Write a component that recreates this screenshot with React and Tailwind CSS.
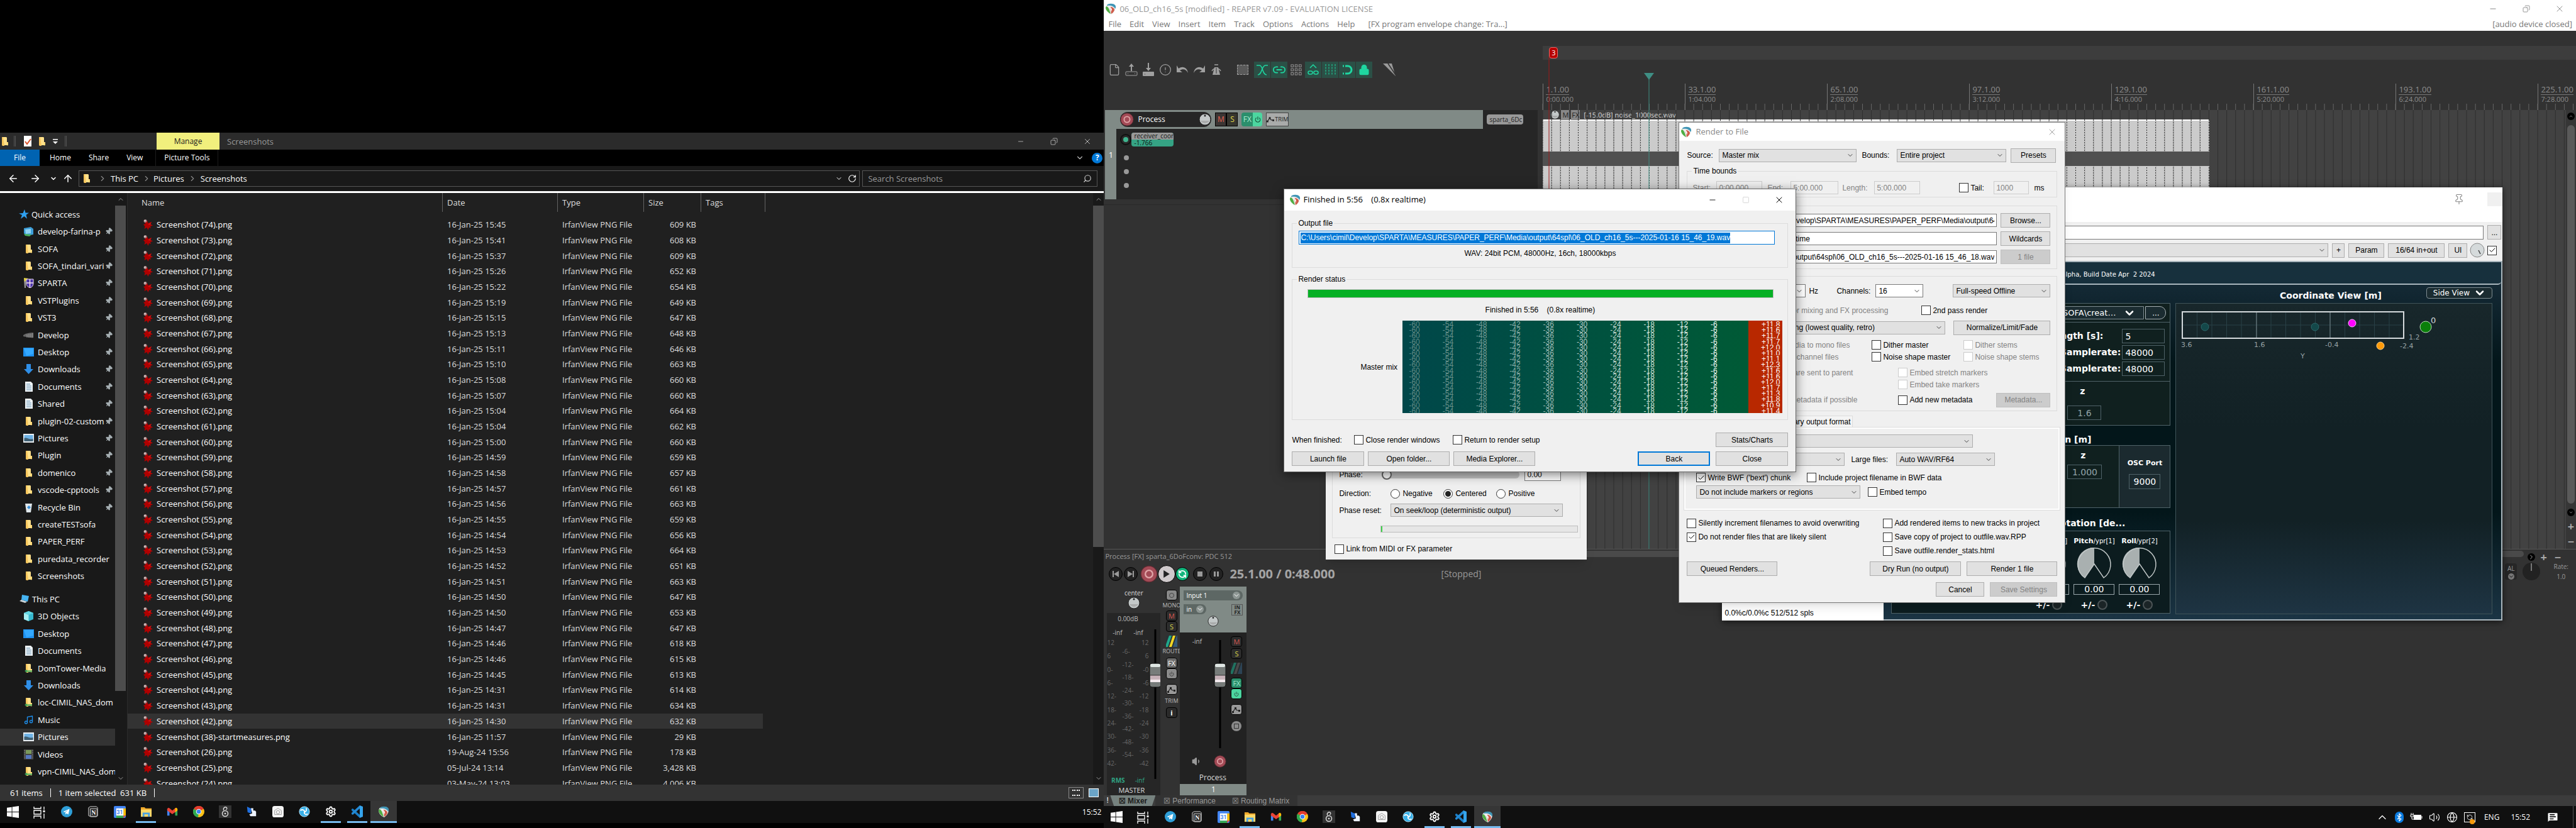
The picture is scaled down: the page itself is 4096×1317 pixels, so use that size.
import React from "react";
import {
  ArrowLeft, ArrowRight, ArrowUp, ChevronDown, ChevronUp, ChevronRight, Check, RotateCw, Search,
  Settings, Pin, X, Minus, Square, Lock, Info, Music, Bluetooth, Volume2, Globe,
  Link2, Copy, Power, Volume1, File, MessageSquareText, RefreshCcw,
} from "lucide-react";

/* ---------- small drawings ---------- */

const Folder = ({ share }) => (
  <svg viewBox="0 0 16 16" className="h-4 w-4 shrink-0">
    <path d="M3 1h7l1 1v12H3z" fill="#ffe08a" />
    <path d="M3 1h2l2 14H4L3 14z" fill="#f7c65c" />
    <path d="M11 9h2v5l-2 .5z" fill="#ffd978" />
    {share && <path d="M1 12l4-2v1.500h8v2H5V15z" fill="#3fa95c" />}
  </svg>
);

const Splat = () => (
  <svg viewBox="0 0 16 18" className="h-[18px] w-4">
    <path d="M7 3l1.500 4L14 5l-2 4 4 1.500-4 1.500 1 3-3-1-1.500 4-2-4-4 2 1-4L1 9l3-1L3 4z" fill="#b00000" />
    <path d="M8 9l6-4-2 4 4 1.500z" fill="#d41111" />
    <circle cx="4" cy="3.500" r="2.500" fill="#a88" />
    <circle cx="3.500" cy="3" r="1" fill="#eee" />
  </svg>
);

const Reaper = ({ className = "h-[18px] w-[18px]" }) => (
  <svg viewBox="0 0 18 18" className={className}>
    <path d="M2 4C4 1 14 0 16 4l1 2c0 5-3 9-7 12C5 16 1 12 1 7z" fill="#e9e9e9" />
    <path d="M2 5c2 0 4 3 5 6l2 6C5 15 1 11 1 7z" fill="#4fae43" />
    <path d="M3 3c3-3 10-3 13 0 2 3 1 5 0 6C15 5 9 3 3 4z" fill="#3f95b5" />
    <path d="M8 6c4 0 7 2 7 5-1 3-3 5-5 6z" fill="#cf5a48" />
    <path d="M5 5c3 1 4 4 5 9l1-4c-1-3-3-5-6-5z" fill="#fff" />
  </svg>
);

const Win = () => (
  <svg viewBox="0 0 20 20" className="h-[19px] w-[19px]" fill="#fff">
    <path d="M0 3l8-1.200V9.500H0zM9 1.600L20 0v9.500H9zM0 10.500h8v7.700L0 17zM9 10.500h11V20L9 18.400z" />
  </svg>
);
const TaskView = () => (
  <svg viewBox="0 0 20 20" className="h-5 w-5" fill="none" stroke="#fff" strokeWidth="1.300">
    <path d="M1 1v3h11V1M1 7h11v6H1zM1 20v-4h11v4M17 1v5M17 12v8" />
    <path d="M17 7v3" strokeWidth="3" />
  </svg>
);
const Telegram = () => (
  <svg viewBox="0 0 20 20" className="h-[18px] w-[18px]">
    <circle cx="10" cy="10" r="10" fill="#2f9fd8" />
    <path d="M4 10l11-5-2 10-3-2-2 2-.3-3.500L13 7l-6.500 4z" fill="#fff" />
  </svg>
);
const Notion = () => (
  <svg viewBox="0 0 20 20" className="h-[18px] w-[18px]">
    <path d="M2 3l3-2h11l2 2v14l-2 2H6l-4-2z" fill="#222" stroke="#ddd" />
    <path d="M5 5h12v13H5z" fill="#222" stroke="#ddd" />
    <text x="11" y="15.500" fontSize="11" fontWeight="700" fill="#fff" textAnchor="middle" fontFamily="Liberation Serif, serif">N</text>
  </svg>
);
const Calendar = () => (
  <svg viewBox="0 0 20 20" className="h-[19px] w-[19px]">
    <rect width="20" height="20" rx="2" fill="#4285f4" />
    <path d="M16 4h4v12h-4z" fill="#fbbc04" />
    <path d="M4 16h12v4H4z" fill="#34a853" />
    <path d="M16 16h4l-4 4z" fill="#ea4335" />
    <path d="M4 4h12v12H4z" fill="#fff" />
    <text x="10" y="13.500" fontSize="9" fontWeight="700" fill="#4285f4" textAnchor="middle" fontFamily="Roboto, sans-serif">31</text>
  </svg>
);
const Explorer = () => (
  <svg viewBox="0 0 20 20" className="h-[19px] w-[19px]">
    <path d="M1 2h6l2 2h10v4H1z" fill="#f0a92a" />
    <path d="M1 6h18v12H1z" fill="#ffd868" />
    <path d="M4 11h12v7h-3v-4H7v4H4z" fill="#4aa3e0" />
  </svg>
);
const Gmail = () => (
  <svg viewBox="0 0 20 20" className="h-[18px] w-[18px]">
    <path d="M1 5h4v12H1z" fill="#4285f4" />
    <path d="M15 5h4v12h-4z" fill="#34a853" />
    <path d="M1 5l2-2 2 1 5 4 5-4 2-1 2 2v3l-9 6.500L1 8z" fill="#ea4335" />
    <path d="M15 4l2-1 2 2v3l-4 3z" fill="#fbbc04" />
  </svg>
);
const Chrome = () => (
  <svg viewBox="0 0 20 20" className="h-[18px] w-[18px]">
    <circle cx="10" cy="10" r="10" fill="#fbc116" />
    <path d="M10 10L1.300 5A10 10 0 0118.700 5z" fill="#e33b2e" />
    <path d="M10 10l-1 10A10 10 0 011.300 5z" fill="#2da94f" />
    <circle cx="10" cy="10" r="4.800" fill="#fff" />
    <circle cx="10" cy="10" r="3.700" fill="#3b82f0" />
  </svg>
);
const Eight = () => (
  <svg viewBox="0 0 20 20" className="h-5 w-5">
    <rect width="20" height="20" fill="#333" />
    <circle cx="10" cy="13" r="4.500" fill="none" stroke="#ddd" strokeWidth="1.500" />
    <circle cx="10" cy="13" r="1.300" fill="#ddd" />
    <path d="M8 8c-2-3 1-6 4-5M11 7c3-1 2-4 0-4" fill="none" stroke="#ddd" strokeWidth="1.300" />
  </svg>
);
const Puzzle = () => (
  <svg viewBox="0 0 20 20" className="h-[18px] w-[18px]">
    <path d="M2 1l8 4-1 8-6-2z" fill="#1f6fe0" />
    <path d="M9 4h4v4h3l2 2v8H8l-2-3 5-2z" fill="#eef4ff" />
  </svg>
);
const WhiteApp = () => (
  <svg viewBox="0 0 20 20" className="h-[18px] w-[18px]">
    <rect width="20" height="20" rx="4" fill="#f4f4f4" />
    <path d="M10 4l6 4v7H4V8z" fill="none" stroke="#999" />
    <circle cx="10" cy="11" r="3" fill="none" stroke="#999" />
  </svg>
);
const BlueWheel = () => (
  <svg viewBox="0 0 20 20" className="h-[18px] w-[18px]">
    <circle cx="10" cy="10" r="9" fill="#39b0e8" stroke="#bfe8fa" />
    <path d="M3 8c4-3 8 0 7 3s3 5 6 3M10 11c3-1 5-4 3-7" stroke="#fff" strokeWidth="2" fill="none" />
  </svg>
);
const Code = () => (
  <svg viewBox="0 0 20 20" className="h-5 w-5">
    <path d="M1 6l2-1 11 10v5L1 8z" fill="#1a7fc8" />
    <path d="M1 14l2 1L14 5V0L1 12z" fill="#2389d4" />
    <path d="M14 0l5 2v16l-5 2z" fill="#35a4ec" />
  </svg>
);

const Gear = () => <Settings className="h-[18px] w-[18px] text-white" strokeWidth={2.500} />;

/* ---------- taskbar ---------- */

const apps = [
  ["Telegram", Telegram, 0], ["Notion", Notion, 0], ["Calendar", Calendar, 0], ["File Explorer", Explorer, 1],
  ["Gmail", Gmail, 0], ["Chrome", Chrome, 0], ["Eight", Eight, 0], ["Components", Puzzle, 0],
  ["Home", WhiteApp, 0], ["Browser", BlueWheel, 0], ["Settings", Gear, 1], ["Code", Code, 1], ["REAPER", Reaper, 2],
];

function Taskbar({ tray }) {
  return (
    <nav aria-label="Taskbar" className="flex h-[35px] shrink-0 items-stretch bg-[#101010] text-[12px] text-white">
      <button aria-label="Start" className="grid w-10 place-items-center"><Win /></button>
      <button aria-label="Task view" className="grid w-[45px] place-items-center"><TaskView /></button>
      {apps.map(([name, Icon, state]) => (
        <button key={name} aria-label={name} className={"flex w-[42px] flex-col items-center " + (state === 2 ? "bg-[#363636]" : "")}>
          <span className="grid flex-1 place-items-center pt-0.5"><Icon /></span>
          <span className={"h-[3px] " + (state === 2 ? "w-full bg-[#76b9ed]" : state === 1 ? "w-8 bg-[#76b9ed]" : "w-0")} />
        </button>
      ))}
      <div className="ml-auto flex items-center">{tray}</div>
    </nav>
  );
}

/* ---------- file explorer ---------- */

const MonitorIcon = () => (
  <svg viewBox="0 0 17 16" className="h-4 w-[17px]">
    <path d="M5 1l11 2-2 9-10-3z" fill="#46b4f2" />
    <path d="M1 11l9 3 3-2-9-3z" fill="#cfd8dc" />
  </svg>
);
const GreenPc = () => (
  <svg viewBox="0 0 17 16" className="h-4 w-[17px]">
    <path d="M1 3l11-2 4 3v9l-11 2-4-4z" fill="#3d9ed8" />
    <path d="M3 5l9-1v7l-8 1z" fill="#8fd3f4" />
    <path d="M1 12l12 1-3 3-7-1z" fill="#49b15c" />
  </svg>
);
const Shield = () => (
  <svg viewBox="0 0 17 16" className="h-4 w-[17px]">
    <path d="M1 1h3v15H2z" fill="#999" /><path d="M1 0l7 1-6 5z" fill="#e5d53a" />
    <path d="M5 2h11v7c0 4-3 6-5 7-3-1-6-3-6-7z" fill="#4a33a8" stroke="#eadcf5" />
    <path d="M10.500 2v14M5 8h11" stroke="#f5e6ee" strokeWidth="1.500" />
  </svg>
);
const Dark = () => (
  <svg viewBox="0 0 17 16" className="h-4 w-[17px]"><path d="M0 8c4-3 10-4 16-4v8c-3 1-5-1-7 0-3-2-6-1-9-2z" fill="#666" /><path d="M6 7v5M9 6v6M12 6v6M15 5v7" stroke="#999" /></svg>
);
const DesktopI = () => (
  <svg viewBox="0 0 17 16" className="h-4 w-[17px]"><path d="M0 1h17v14H0z" fill="#1e90ef" /><path d="M1 2h15v9L5 14z" fill="#33a8ff" /></svg>
);
const Down = () => (
  <svg viewBox="0 0 17 16" className="h-4 w-[17px]"><path d="M5 0h7v8h4l-7.500 8L1 8h4z" fill="#2f8fe8" /></svg>
);
const Doc = () => (
  <svg viewBox="0 0 17 16" className="h-4 w-[17px]"><path d="M3 0h9l3 3v13H3z" fill="#eef3f6" /><path d="M5 4h6M5 7h8M5 10h8M5 13h8" stroke="#5c8db0" /></svg>
);
const Pic = () => (
  <svg viewBox="0 0 17 16" className="h-4 w-[17px]"><path d="M0 1h17v14H0z" fill="#e8eef2" /><path d="M1.500 3h14v9h-14z" fill="#6fb3e6" /><path d="M1.500 8c4-2 8 3 14 1v4h-14z" fill="#3f5f73" /></svg>
);
const Cube = () => (
  <svg viewBox="0 0 17 16" className="h-4 w-[17px]"><path d="M8.500 0L16 3v10l-7.500 3L1 13V3z" fill="#37b8cf" /><path d="M8.500 6v10L1 13V3z" fill="#a6eef2" /><path d="M8.500 0L16 3 8.500 6 1 3z" fill="#63d7e3" /></svg>
);
const Film = () => (
  <svg viewBox="0 0 17 16" className="h-4 w-[17px]"><path d="M1 0h15v16H1z" fill="#444" /><path d="M4 1h9v6H4z" fill="#7a9a5a" /><path d="M4 9h9v6H4z" fill="#5577c0" /><path d="M2 1v15M15 1v15" stroke="#aaa" strokeDasharray="1 2" /></svg>
);
const Bin = () => (
  <svg viewBox="0 0 17 16" className="h-4 w-[17px]"><path d="M3 2h11l-2 14H5z" fill="#dfe6ea" /><path d="M6 8l3-3 3 3-3 3z" fill="#3a8fd8" /></svg>
);
const Star = () => (
  <svg viewBox="0 0 16 16" className="h-4 w-4"><path d="M9 0l1.500 5.500H16l-4.500 3.300L13 15 8.500 11 3 15l2-6L0 6.500 6.500 6z" fill="#2fa0f0" /></svg>
);
const Note = () => <Music className="h-4 w-[17px] text-[#1e90ef]" />;

const quick = [
  ["develop-farina-p", GreenPc, 1], ["SOFA", Folder, 1], ["SOFA_tindari_vari", Folder, 1], ["SPARTA", Shield, 1],
  ["VSTPlugins", Folder, 1], ["VST3", Folder, 1], ["Develop", Dark, 1], ["Desktop", DesktopI, 1], ["Downloads", Down, 1],
  ["Documents", Doc, 1], ["Shared", Doc, 1], ["plugin-02-custom", Folder, 1], ["Pictures", Pic, 1], ["Plugin", Folder, 1],
  ["domenico", Folder, 1], ["vscode-cpptools", Folder, 1], ["Recycle Bin", Bin, 1], ["createTESTsofa", Folder, 0],
  ["PAPER_PERF", Folder, 0], ["puredata_recorder", Folder, 0], ["Screenshots", Folder, 0],
];
const Net = () => <Folder share />;
const thisPc = [
  ["3D Objects", Cube], ["Desktop", DesktopI], ["Documents", Doc], ["DomTower-Media", Net], ["Downloads", Down],
  ["loc-CIMIL_NAS_dom", Net], ["Music", Note], ["Pictures", Pic, 0, 1], ["Videos", Film], ["vpn-CIMIL_NAS_dom", Net],
];

const J = "16-Jan-25 ";
const stamps = [
  ["15:45", 609], ["15:41", 608], ["15:37", 609], ["15:26", 652], ["15:22", 654], ["15:19", 649], ["15:15", 647],
  ["15:13", 648], ["15:11", 646], ["15:10", 663], ["15:08", 660], ["15:07", 660], ["15:04", 664], ["15:04", 662],
  ["15:00", 660], ["14:59", 659], ["14:58", 657], ["14:57", 661], ["14:56", 663], ["14:55", 659], ["14:54", 656],
  ["14:53", 664], ["14:52", 651], ["14:51", 663], ["14:50", 647], ["14:50", 653], ["14:47", 647], ["14:46", 618],
  ["14:46", 615], ["14:45", 613], ["14:31", 614], ["14:31", 634], ["14:30", 632],
];
const files = [
  ...stamps.map(([t, s], i) => ["Screenshot (" + (74 - i) + ").png", J + t, s + " KB"]),
  ["Screenshot (38)-startmeasures.png", J + "11:57", "29 KB"],
  ["Screenshot (26).png", "19-Aug-24 15:56", "178 KB"],
  ["Screenshot (25).png", "05-Jul-24 13:14", "3,428 KB"],
  ["Screenshot (24).png", "03-May-24 13:03", "4,006 KB"],
];

function NavItem({ label, Icon, pinned, active }) {
  return (
    <li className={"flex items-center " + (active ? "bg-[#333]" : "")}>
      <a href="#" className="flex min-w-0 flex-1 items-center pl-[37px]">
        <span className="grid w-[17px] shrink-0 place-items-center"><Icon /></span>
        <span className={"ml-1.5 overflow-hidden whitespace-nowrap " + (pinned ? "w-[107px]" : "flex-1")}>{label}</span>
        {pinned ? <Pin className="h-3 w-3 shrink-0 rotate-45 fill-[#a5aeb2] text-[#a5aeb2]" /> : null}
      </a>
    </li>
  );
}

function ExplorerWindow() {
  return (
    <section aria-label="Screenshots" className="flex min-h-0 flex-1 flex-col bg-[#191919] text-[13px] leading-4 text-white">
      <header className="flex h-[27px] shrink-0 items-center bg-[#2b2b2b]">
        <div className="flex w-[249px] items-center">
          <Folder />
          <span className="ml-1.5 mr-3 h-[17px] w-[3px] border-x border-[#555]" />
          <svg viewBox="0 0 14 17" className="h-[17px] w-3.5"><path d="M1 0h12v17H1z" fill="#fff" /><path d="M3 9l3 4 6-8" stroke="#d9532c" strokeWidth="2" fill="none" /></svg>
          <span className="ml-2"><Folder /></span>
          <svg viewBox="0 0 10 8" className="ml-2 h-2 w-2.5" fill="#fff"><path d="M1 0h8v1.500H1zM1 4h8L5 8z" /></svg>
          <span className="ml-2.5 h-[17px] w-[3px] border-x border-[#555]" />
        </div>
        <div className="grid h-full w-[100px] place-items-center bg-[#f1ef7d] text-[12px] text-[#222]">Manage</div>
        <h1 className="ml-3 text-[#999]">Screenshots</h1>
        <div className="ml-auto flex text-[#ccc]">
          <button aria-label="Minimize" className="grid w-[53px] place-items-center"><Minus className="h-3 w-3" strokeWidth={1.500} /></button>
          <button aria-label="Maximize" className="grid w-[53px] place-items-center"><Copy className="h-3 w-3 -scale-x-100" strokeWidth={1.500} /></button>
          <button aria-label="Close" className="grid w-[53px] place-items-center"><X className="h-3.5 w-3.5" strokeWidth={1.500} /></button>
        </div>
      </header>
      <nav className="flex h-[26px] shrink-0 items-center bg-black text-[12px]">
        <button className="h-full w-[63px] bg-[#0063b1]">File</button>
        <button className="ml-4">Home</button>
        <button className="ml-7">Share</button>
        <button className="ml-7">View</button>
        <button className="ml-5 h-full w-[100px] border-x border-[#1c1c1c]">Picture Tools</button>
        <ChevronDown className="ml-auto h-3.5 w-3.5 text-[#bbb]" />
        <button aria-label="Help" className="ml-3 mr-0.5 grid h-[17px] w-[17px] place-items-center rounded-full bg-[#0078d7] text-[12px] font-bold">?</button>
      </nav>
      <div className="flex h-10 shrink-0 items-center">
        <button aria-label="Back"><ArrowLeft className="ml-3 h-[18px] w-[18px]" /></button>
        <button aria-label="Forward"><ArrowRight className="ml-[17px] h-[18px] w-[18px]" /></button>
        <button aria-label="Recent"><ChevronDown className="ml-3.5 h-3 w-3" strokeWidth={3} /></button>
        <button aria-label="Up"><ArrowUp className="ml-2 h-[18px] w-[18px]" /></button>
        <div className="ml-2 flex h-[26px] flex-1 items-center border border-[#555] pl-1">
          <Folder />
          <ChevronRight className="ml-2.5 h-3.5 w-3.5 text-[#888]" />
          <a href="#" className="ml-1.5">This PC</a>
          <ChevronRight className="ml-1.5 h-3.5 w-3.5 text-[#888]" />
          <a href="#" className="ml-1">Pictures</a>
          <ChevronRight className="ml-1.5 h-3.5 w-3.5 text-[#888]" />
          <a href="#" className="ml-1.5">Screenshots</a>
          <ChevronDown className="ml-auto h-3 w-3" />
          <RotateCw className="ml-2 mr-1 h-3.5 w-3.5" />
        </div>
        <label className="ml-1 mr-2.5 flex h-[26px] w-[374px] items-center border border-[#555] px-2">
          <input aria-label="Search" placeholder="Search Screenshots" className="flex-1 bg-transparent outline-none placeholder:text-[#999]" />
          <Search className="h-3.5 w-3.5 -scale-x-100 text-[#ccc]" />
        </label>
      </div>
      <div className="h-[3px] shrink-0 bg-white" />
      <div className="flex min-h-0 flex-1">
        <nav aria-label="Folders" className="w-[183px] shrink-0 overflow-hidden pt-5">
          <ul className="grid h-[603px] auto-rows-fr">
            <li className="flex items-center pl-[30px]"><Star /><span className="ml-1">Quick access</span></li>
            {quick.map(([l, I, p]) => <NavItem key={l} label={l} Icon={I} pinned={p} />)}
          </ul>
          <ul className="mt-[9px] grid h-[302px] auto-rows-fr">
            <li className="flex items-center pl-[30px]"><MonitorIcon /><span className="ml-1">This PC</span></li>
            {thisPc.map(([l, I, p, a]) => <NavItem key={l} label={l} Icon={I} pinned={p} active={a} />)}
          </ul>
        </nav>
        <div className="flex w-[17px] shrink-0 flex-col items-center">
          <ChevronUp className="h-5 w-3 text-[#999]" />
          <div className="h-[772px] w-full bg-[#4d4d4d]" />
          <ChevronDown className="mt-auto h-5 w-3 text-[#999]" />
        </div>
        <div className="w-[3px] shrink-0 border-r border-[#2b2b2b]" />
        <div className="min-w-0 flex-1 overflow-hidden bg-[#202020]">
          <table className="w-[1014px] table-fixed border-separate border-spacing-0 text-left">
            <colgroup><col className="w-[501px]" /><col className="w-[183px]" /><col className="w-[137px]" /><col className="w-[91px]" /><col className="w-[102px]" /></colgroup>
            <thead>
              <tr className="h-[30px] text-[#dedede]">
                {["Name", "Date", "Type", "Size", "Tags"].map((h, i) => (
                  <th key={h} className={"border-r border-[#636363] font-normal " + (i ? "pl-[7px]" : "pl-[22px]")}>{h}</th>
                ))}
              </tr>
            </thead>
          </table>
          <table className="mt-2 h-[913px] w-[1010px] table-fixed border-separate border-spacing-0 text-[#dedede]">
            <colgroup><col className="w-[501px]" /><col className="w-[183px]" /><col className="w-[137px]" /><col className="w-[91px]" /><col className="w-[98px]" /></colgroup>
            <tbody>
              {files.map(([n, d, s], i) => (
                <tr key={n} className={i === 32 ? "bg-[#333]" : ""}>
                  <td className="py-0 pl-6"><span className="flex items-center gap-1.5 text-white"><Splat />{n}</span></td>
                  <td className="py-0 pl-[7px]">{d}</td>
                  <td className="py-0 pl-[7px]">IrfanView PNG File</td>
                  <td className="py-0 pr-2 text-right">{s}</td>
                  <td className="p-0" />
                </tr>
              ))}
            </tbody>
          </table>
        </div>
        <div className="flex w-[17px] shrink-0 flex-col items-center">
          <ChevronUp className="h-5 w-3 text-[#999]" />
          <div className="h-[543px] w-full bg-[#4d4d4d]" />
          <ChevronDown className="mt-auto h-5 w-3 text-[#999]" />
        </div>
      </div>
      <footer className="flex h-[26px] shrink-0 items-center bg-[#333] pl-4">
        <span>61 items</span><span className="mx-3 h-3.5 w-px bg-white" />
        <span>1 item selected&nbsp; 631 KB</span><span className="mx-3 h-3.5 w-px bg-white" />
        <span className="ml-auto mr-2 grid h-[18px] w-6 place-items-center border border-[#888]"><span className="h-2.5 w-3 border-y-2 border-dotted border-white" /></span>
        <span className="mr-2 h-3.5 w-4 border border-white bg-[#6ba4c7]" />
      </footer>
    </section>
  );
}

/* ---------- form controls ---------- */

const Btn = ({ children, className = "", disabled, focus }) => (
  <button disabled={disabled} className={"grid h-[23px] shrink-0 place-items-center whitespace-nowrap " +
    (disabled ? "border border-[#bfbfbf] bg-[#ccc] text-[#838383] " : focus ? "border-2 border-[#0078d7] bg-[#e1e1e1] " : "border border-[#adadad] bg-[#e1e1e1] ") + className}>
    {children}
  </button>
);

const Tick = ({ label, checked, disabled, className = "" }) => (
  <label className={"flex shrink-0 items-center whitespace-nowrap " + (disabled ? "text-[#838383] " : "") + className}>
    <span className="mr-[3px] grid place-items-center">
      <input type="checkbox" defaultChecked={checked} disabled={disabled}
        className={"h-[15px] w-[15px] appearance-none border bg-white [grid-area:1/1] " + (disabled ? "border-[#ccc]" : "border-[#333]")} />
      {checked && <Check className="pointer-events-none h-3 w-3 [grid-area:1/1]" strokeWidth={2} />}
    </span>
    {label}
  </label>
);

const Pick = ({ value, label, className = "", white }) => (
  <span className={"grid h-[21px] shrink-0 items-center " + className}>
    <select aria-label={label || value} defaultValue={value}
      className={"h-full w-full min-w-0 appearance-none border pl-1 [grid-area:1/1] " + (white ? "border-[#7a7a7a] bg-white" : "border-[#adadad] bg-[#e1e1e1]")}>
      <option>{value}</option>
    </select>
    <ChevronDown className="pointer-events-none mr-1 h-3 w-3 justify-self-end text-[#444] [grid-area:1/1]" />
  </span>
);

const Field = ({ value, label, className = "", disabled }) => (
  <input aria-label={label} defaultValue={value} disabled={disabled}
    className={"h-[21px] min-w-0 border px-[3px] " + (disabled ? "border-[#ccc] text-[#838383] " : "border-[#7a7a7a] bg-white ") + className} />
);

const Group = ({ legend, children, className = "" }) => (
  <fieldset className={"min-w-0 border border-[#dcdcdc] " + className}>
    <legend className="ml-[7px] h-4 px-0.5 leading-4">{legend}</legend>
    {children}
  </fieldset>
);

/* ---------- dialogs ---------- */

function RenderDialog() {
  return (
    <section aria-label="Render to File" className="absolute left-[914px] top-[194px] w-[615px] border border-[#777] bg-[#f0f0f0] text-[12px] text-black shadow-lg">
      <header className="flex h-[29px] items-center bg-white pl-0.5 pr-3 text-[13px] text-[#888]">
        <Reaper /><h2 className="ml-1.5 font-['Open_Sans',sans-serif]">Render to File</h2>
        <button aria-label="Close" className="ml-auto"><X className="h-4 w-4" strokeWidth={1.200} /></button>
      </header>
      <div className="px-3 pb-[9px]">
        <div className="mt-3 flex h-[22px] items-center">
          <span className="w-[51px]">Source:</span><Pick value="Master mix" label="Source" className="w-[219px]" />
          <span className="ml-2 w-[56px]">Bounds:</span><Pick value="Entire project" label="Bounds" className="w-[174px]" />
          <Btn className="ml-[7px] h-[21px] w-[72px]">Presets</Btn>
        </div>
        <Group legend="Time bounds" className="mt-1.5 pb-1">
          <div className="mt-2 flex h-[21px] items-center pl-2">
            <span className="w-[38px] text-[#838383]">Start:</span><Field label="Start" value="0:00.000" disabled className="w-[73px]" />
            <span className="ml-2 w-[37px] text-[#838383]">End:</span><Field label="End" value="5:00.000" disabled className="w-[76px]" />
            <span className="ml-1.5 w-[51px] text-[#838383]">Length:</span><Field label="Length" value="5:00.000" disabled className="w-[73px]" />
            <Tick label="Tail:" className="ml-[62px] w-[55px]" /><Field label="Tail length" value="1000" disabled className="w-[56px]" />
            <span className="ml-2">ms</span>
          </div>
        </Group>
        <Group legend="Output" className="mt-[5px] pb-2 pl-2 pr-2.5">
          <div className="mt-[5px] flex flex-col gap-2">
            {[["Directory:", "C:\\Users\\cimil\\Develop\\SPARTA\\MEASURES\\PAPER_PERF\\Media\\output\\64spl", "Browse...", "text-right"],
              ["File name:", "$project---$datetime", "Wildcards", "pl-2.5"],
              ["Render to:", "Media\\output\\64spl\\06_OLD_ch16_5s---2025-01-16 15_46_18.wav", "1 file", "text-right"]].map(([l, v, b, a], i) => (
              <div key={l} className="flex h-[21px] items-center">
                <span className="w-[68px]">{l}</span><Field label={l} value={v} className={"flex-1 " + a} />
                <Btn disabled={i === 2} className="ml-1.5 h-[21px] w-[79px]">{b}</Btn>
              </div>
            ))}
          </div>
        </Group>
        <Group legend="Options" className="mt-[3px] pb-1.5 pl-2 pr-2.5">
          <div className="mt-[5px] flex h-[21px] items-center">
            <span className="w-20">Sample rate:</span><Pick white value="48000" label="Sample rate" className="w-[100px]" />
            <span className="ml-[5px] w-11">Hz</span><span className="w-[62px]">Channels:</span><Pick white value="16" label="Channels" className="w-[76px]" />
            <Pick value="Full-speed Offline" label="Speed" className="ml-auto w-[155px]" />
          </div>
          <div className="flex h-[37px] items-center pt-1">
            <Tick disabled label="Use project sample rate for mixing and FX processing" className="w-[311px] justify-end" />
            <Tick label="2nd pass render" className="ml-[53px]" />
          </div>
          <div className="flex h-[22px] items-center">
            <span className="w-[90px]">Resample mode:</span><Pick value="Point Sampling (lowest quality, retro)" label="Resample mode" className="w-[312px]" />
            <Btn className="ml-auto h-[22px] w-[154px]">Normalize/Limit/Fade</Btn>
          </div>
          <div className="mt-[7px] flex h-[19px] items-center">
            <Tick disabled label="Tracks with only mono media to mono files" className="w-[250px] justify-end" />
            <Tick label="Dither master" className="ml-[35px] w-[146px]" /><Tick disabled label="Dither stems" />
          </div>
          <div className="flex h-[19px] items-center">
            <Tick disabled label="Multichannel tracks to multichannel files" className="w-[232px] justify-end" />
            <Tick label="Noise shape master" className="ml-[53px] w-[146px]" /><Tick disabled label="Noise shape stems" />
          </div>
          <div className="mt-1.5 flex h-[19px] items-center">
            <Tick disabled label="Only render channels that are sent to parent" className="w-[255px] justify-end" />
            <Tick disabled label="Embed stretch markers" className="ml-[72px]" />
          </div>
          <div className="flex h-[19px] items-center"><Tick disabled label="Embed take markers" className="ml-[327px]" /></div>
          <div className="mt-1 flex h-[22px] items-center">
            <Tick disabled label="Preserve source media metadata if possible" className="w-[262px] justify-end" />
            <Tick label="Add new metadata" className="ml-[65px]" />
            <Btn disabled className="ml-auto h-[21px] w-[86px]">Metadata...</Btn>
          </div>
        </Group>
        <div className="-mx-1 mt-[7px]">
          <div role="tablist" className="flex h-[19px] items-stretch">
            <button role="tab" className="w-[130px] border border-b-0 border-[#dcdcdc]">Primary output format</button>
            <button role="tab" className="w-[138px] border border-b-0 border-l-0 border-[#dcdcdc] bg-[#f4f4f4]">Secondary output format</button>
          </div>
          <div className="border-2 border-white pb-4 pl-[17px] outline outline-[#dcdcdc]">
            <div className="mt-[9px] flex h-[21px] items-center"><span className="w-11">Format:</span><Pick value="WAV" label="Format" className="w-[396px]" /></div>
            <div className="mt-2 flex h-[21px] items-center">
              <span className="w-[94px]">WAV bit depth:</span><Pick value="24 bit PCM" label="Bit depth" className="w-[142px]" />
              <span className="ml-2.5 w-[72px]">Large files:</span><Pick value="Auto WAV/RF64" label="Large files" className="w-[157px]" />
            </div>
            <div className="mt-[9px] flex h-[19px] items-center"><Tick checked label="Write BWF ('bext') chunk" className="w-[176px]" /><Tick label="Include project filename in BWF data" /></div>
            <div className="mt-[3px] flex h-[21px] items-center"><Pick value="Do not include markers or regions" label="Markers" className="w-[261px]" /><Tick label="Embed tempo" className="ml-3" /></div>
          </div>
        </div>
        <div className="mt-2.5 grid auto-rows-[22px] grid-cols-[312px_1fr] items-center">
          <Tick label="Silently increment filenames to avoid overwriting" /><Tick label="Add rendered items to new tracks in project" />
          <Tick checked label="Do not render files that are likely silent" /><Tick label="Save copy of project to outfile.wav.RPP" />
          <span /><Tick label="Save outfile.render_stats.html" />
        </div>
        <div className="mt-1.5 flex"><Btn className="w-[144px]">Queued Renders...</Btn><Btn className="ml-auto w-[145px]">Dry Run (no output)</Btn><Btn className="ml-[9px] w-[144px]">Render 1 file</Btn></div>
        <div className="mt-2.5 flex justify-end"><Btn className="w-[77px]">Cancel</Btn><Btn disabled className="ml-[9px] w-[107px]">Save Settings</Btn></div>
      </div>
    </section>
  );
}

const peaks = ["+11.8", "+11.6", "+11.7", "+11.7", "+12.0", "+11.0", "+11.1", "+12.3", "+11.6", "+11.6", "+12.0", "+11.7", "+11.3", "+11.8", "+10.9", "+11.4"];
const levels = [
  ["-60", "text-[#5f8783]"], ["-54", "text-[#67908b]"], ["-48", "text-[#779c97]"], ["-42", "text-[#8cada7]"], ["-36", "text-[#9dbab3]"],
  ["-30", "text-[#b3c9c3]"], ["-24", "text-[#c2d6cd]"], ["-18", "text-[#d3e3da]"], ["-12", "text-[#e4efe8]"], ["-6", "text-[#f2f8f4]"],
];

function FinishedDialog() {
  return (
    <section aria-label="Finished" className="absolute left-[286px] top-[300px] w-[815px] border border-[#666] bg-[#f0f0f0] text-[12px] text-black shadow-[0_4px_16px_rgba(0,0,0,0.5)]">
      <header className="flex h-[34px] items-center bg-white pl-2 text-[13px]">
        <Reaper /><h2 className="ml-1 whitespace-pre font-['Open_Sans',sans-serif]">Finished in 5:56    (0.8x realtime)</h2>
        <div className="ml-auto flex">
          <button aria-label="Minimize" className="grid w-[53px] place-items-center"><Minus className="h-3.5 w-3.5" strokeWidth={1.500} /></button>
          <button aria-label="Maximize" disabled className="grid w-[53px] place-items-center text-[#ccc]"><Square className="h-3 w-3" strokeWidth={1.500} /></button>
          <button aria-label="Close" className="grid w-[53px] place-items-center"><X className="h-4 w-4" strokeWidth={1.500} /></button>
        </div>
      </header>
      <div className="px-3 pb-[9px]">
        <Group legend="Output file" className="mt-3 pb-3.5">
          <div className="ml-2.5 mr-5 mt-1 flex h-[22px] items-center border border-[#0078d7] bg-white px-0.5">
            <output className="whitespace-nowrap bg-[#0078d7] leading-[17px] text-white">C:\Users\cimil\Develop\SPARTA\MEASURES\PAPER_PERF\Media\output\64spl\06_OLD_ch16_5s---2025-01-16 15_46_19.wav</output>
          </div>
          <p className="mt-1.5 text-center leading-4">WAV: 24bit PCM, 48000Hz, 16ch, 18000kbps</p>
        </Group>
        <Group legend="Render status" className="mt-2.5 pb-2.5">
          <div role="progressbar" aria-valuenow="100" className="ml-6 mr-[22px] mt-2 h-3.5 border border-[#bcbcbc] bg-[#06b025]" />
          <p className="mt-[11px] whitespace-pre text-center leading-4">Finished in 5:56    (0.8x realtime)</p>
          <div className="mt-[9px] flex h-[147px] items-center pl-[108px] pr-2">
            <span className="w-[67px] shrink-0">Master mix</span>
            <div className="flex h-full min-w-0 flex-1 flex-col overflow-hidden bg-[linear-gradient(90deg,#00474a,#005a36_90%)] text-[12px] leading-[9px]">
              {peaks.map((p, i) => (
                <div key={i} className="flex min-h-0 flex-1">
                  <div className="grid flex-1 grid-cols-10 pl-2.5 pr-[7px] pt-0.5">
                    {levels.map(([l, c]) => <span key={l} className={c}>{l}</span>)}
                  </div>
                  <span className="w-[54px] bg-[#b82800] pr-1 pt-0.5 text-right text-white">{p}</span>
                </div>
              ))}
            </div>
          </div>
        </Group>
        <div className="mt-5 flex h-[23px] items-center">
          <span className="w-[99px]">When finished:</span><Tick label="Close render windows" className="w-[157px]" /><Tick label="Return to render setup" />
          <Btn className="ml-auto w-[115px]">Stats/Charts</Btn>
        </div>
        <div className="mt-[7px] flex">
          <Btn className="w-[115px]">Launch file</Btn><Btn className="ml-1.5 w-[130px]">Open folder...</Btn><Btn className="ml-1.5 w-[130px]">Media Explorer...</Btn>
          <Btn focus className="ml-auto w-[115px]">Back</Btn><Btn className="ml-[9px] w-[115px]">Close</Btn>
        </div>
      </div>
    </section>
  );
}

function ModDialog() {
  return (
    <section aria-label="Parameter modulation" className="absolute left-[353px] top-[722px] w-[415px] bg-[#f0f0f0] text-[12px] text-black shadow-lg">
      <div className="mx-2.5 border border-t-0 border-[#dcdcdc] pb-2 pl-2.5 pt-[22px]">
        <div className="flex h-[21px] items-center">
          <label htmlFor="phase" className="w-[68px]">Phase:</label>
          <input id="phase" type="range" defaultValue="0" className="h-3 w-[219px] appearance-none rounded-full bg-[#c4c4c4] [&::-webkit-slider-thumb]:h-4 [&::-webkit-slider-thumb]:w-4 [&::-webkit-slider-thumb]:appearance-none [&::-webkit-slider-thumb]:rounded-full [&::-webkit-slider-thumb]:border-2 [&::-webkit-slider-thumb]:border-[#666] [&::-webkit-slider-thumb]:bg-white" />
          <Field label="Phase value" value="0.00" className="ml-2 w-[58px]" />
        </div>
        <div className="mt-2.5 flex h-5 items-center">
          <span className="w-[82px]">Direction:</span>
          {["Negative", "Centered", "Positive"].map((r) => (
            <label key={r} className="flex w-[84px] items-center gap-1">
              <span className="grid place-items-center">
                <input type="radio" name="direction" defaultChecked={r === "Centered"} className="h-[15px] w-[15px] appearance-none rounded-full border border-[#333] bg-white [grid-area:1/1]" />
                {r === "Centered" && <span className="h-[9px] w-[9px] rounded-full bg-[#222] [grid-area:1/1]" />}
              </span>{r}
            </label>
          ))}
        </div>
        <div className="mt-1.5 flex items-center"><span className="w-[82px]">Phase reset:</span><Pick value="On seek/loop (deterministic output)" label="Phase reset" className="w-[274px]" /></div>
        <div className="ml-[66px] mt-3.5 h-[11px] w-[314px] border border-[#bcbcbc] bg-[#e6e6e6]"><div className="h-full w-0.5 bg-[#3ecf4a]" /></div>
      </div>
      <div className="px-3.5 pb-2 pt-2"><Tick label="Link from MIDI or FX parameter" /></div>
    </section>
  );
}

/* ---------- plug-in window ---------- */

const Box = ({ children, className = "" }) => (
  <input aria-label="value" defaultValue={children} className={"min-w-0 border border-[#4f6268] bg-transparent px-1 text-[14px] " + className} />
);

const Dial = () => (
  <svg viewBox="0 0 56 56" className="h-14 w-14">
    <path d="M28 28V2A26 26 0 0 0 13 50z" fill="#a9b0b0" />
    <path d="M13 50A26 26 0 1 1 43 50L28 28z" fill="none" stroke="#c2c8c8" strokeWidth="1.500" />
  </svg>
);

const room = Array.from({ length: 14 }, (_, i) => i + 1);

function PluginWindow() {
  return (
    <section aria-label="FX" className="absolute left-[983px] top-[298px] flex h-[689px] w-[1241px] flex-col bg-[#f0f0f0] text-[12px] text-black shadow-[0_2px_10px_rgba(0,0,0,0.6)]">
      <header className="flex h-[55px] shrink-0 items-start justify-end bg-white pt-2">
        <Pin className="mr-9 mt-0.5 h-[18px] w-[18px] text-[#888]" strokeWidth={1.500} />
        <span className="h-[22px] w-6 bg-[#f0f0f0]" />
      </header>
      <div className="flex shrink-0 items-center pl-[300px] pr-0.5 pt-[5px]">
        <Field label="Comment" value="" className="h-[22px] flex-1" /><Btn className="ml-1.5 h-5 w-[22px]">...</Btn>
      </div>
      <div className="flex h-[34px] shrink-0 items-center pl-[300px] pr-2.5">
        <Pick value="" label="Preset" className="h-[22px] flex-1" />
        <Btn className="ml-1.5 h-5 w-5">+</Btn><Btn className="ml-1.5 h-5 w-[57px]">Param</Btn><Btn className="ml-1.5 h-5 w-[90px]">16/64 in+out</Btn><Btn className="ml-1.5 h-5 w-[30px]">UI</Btn>
        <svg viewBox="0 0 24 24" className="mx-1 h-6 w-6"><circle cx="12" cy="12" r="11" fill="#d5dadb" stroke="#888" /><path d="M14 12l3 6" stroke="#444" strokeWidth="1.500" /></svg>
        <Tick checked label="" className="-mr-1" />
      </div>
      <div className="flex min-h-0 flex-1">
        <div className="flex w-[257px] shrink-0 flex-col justify-end bg-white pb-[3px] pl-1">0.0%c/0.0%c 512/512 spls</div>
        <div className="flex min-w-0 flex-1 flex-col border-2 border-l-0 border-[#a9b6bd] bg-[linear-gradient(180deg,#192f3d,#03161a_28%,#03161a_70%,#1b3444)] font-['DejaVu_Sans',sans-serif] text-white">
          <div className="flex h-9 shrink-0 items-center rounded-[5px] border-b-2 border-[#a9b6bd] bg-[#17303d] pl-[190px] pt-1 text-[10px]">
            <span className="whitespace-pre">SPARTA 6DoFconv alpha, Build Date Apr  2 2024</span>
          </div>
          <div className="flex min-h-0 flex-1">
            <div className="flex w-[456px] shrink-0 flex-col pl-3 pt-[29px]">
              <div className="flex h-[125px] flex-col border border-[#4f6268] bg-[#10201f]">
                <div className="flex h-[30px] items-center justify-end border-b border-[#4f6268] pr-1.5">
                  <button className="flex h-[21px] w-[230px] items-center justify-end gap-3 rounded-l border border-[#7f8d92] bg-[#1b2c31] pr-3 text-[13px]">C:\SOFA\creat… <ChevronDown className="h-5 w-5" strokeWidth={3} /></button>
                  <button className="ml-0.5 h-[21px] w-[33px] rounded-r-[10px] border border-[#a7b1b5] bg-[#1b2c31]">...</button>
                </div>
                {[["Filter Length [s]:", "5"], ["Filter Samplerate:", "48000"], ["Host Samplerate:", "48000"]].map(([l, v], i) => (
                  <label key={l} className={"flex items-center justify-end pr-2 text-[14px] font-bold " + (i ? "mt-[3px]" : "mt-2.5")}>
                    <span className={i ? "" : "mr-7"}>{l}</span><Box className="ml-0.5 h-[23px] w-[68px] font-normal">{v}</Box>
                  </label>
                ))}
              </div>
              <div className="flex h-[70px] flex-col items-end border border-t-0 border-[#4f6268] bg-[#10201f] pr-[109px]">
                <span className="mr-[26px] mt-[5px] text-[14px] font-bold">z</span>
                <Box className="mt-3 h-[23px] w-[54px] bg-[#15272b] text-center text-[#8fa0a5]">1.6</Box>
              </div>
              <h3 className="mr-[126px] h-[31px] pt-3 text-right text-[14px] font-bold leading-5">Listener Position [m]</h3>
              <div className="flex h-[100px] border border-[#4f6268] bg-[#10201f]">
                <div className="flex flex-1 flex-col items-end pr-[27px] pt-[5px]">
                  <span className="mr-[26px] text-[14px] font-bold">z</span>
                  <Box className="mt-1 h-[23px] w-[55px] bg-[#44585f] text-center text-[#93a5ab]">1.000</Box>
                </div>
                <div className="flex w-[81px] flex-col items-center border-l border-[#4f6268] bg-[#1b2a2f] pt-5">
                  <span className="text-[11px] font-bold">OSC Port</span>
                  <Box className="mt-2 h-6 w-[50px] text-center">9000</Box>
                </div>
              </div>
              <h3 className="mr-[72px] h-9 pt-3.5 text-right text-[14px] font-bold leading-5">Rotation [de...</h3>
              <div className="flex h-[132px] justify-end gap-[7px] border border-[#4f6268] bg-[#0c1c1f] pr-4 pt-2">
                {[["Yaw", "0"], ["Pitch", "1"], ["Roll", "2"]].map(([n, i]) => (
                  <div key={n} className="flex w-[65px] flex-col items-center">
                    <span className="whitespace-nowrap text-[11px] leading-4"><b>{n}</b><span className="text-[10px]">/ypr[{i}]</span></span>
                    <Dial />
                    <Box className="mt-1 h-[17px] w-full border-[#9aa7ab] text-center">0.00</Box>
                    <span className="mt-2 flex items-center gap-1 text-[14px] font-bold leading-4">+/-<span className="h-4 w-4 rounded-full border-2 border-[#4c5456] bg-[#1b2426]" /></span>
                  </div>
                ))}
              </div>
            </div>
            <div className="flex min-w-0 flex-1 flex-col pb-2 pl-2 pr-3.5">
              <div className="flex h-[29px] items-center">
                <h3 className="flex-1 pl-[94px] pt-1.5 text-center text-[14px] font-bold">Coordinate View [m]</h3>
                <button className="mb-1 flex h-[18px] w-[105px] items-center justify-center gap-1.5 rounded border border-[#7f8d92] bg-[#1b2c31] text-[12px]">Side View<ChevronDown className="h-5 w-5" strokeWidth={3} /></button>
              </div>
              <div className="min-h-0 flex-1 border border-[#3f5358] bg-[linear-gradient(180deg,#18272b,#122125_40%,#122125_70%,#1e3443)]">
                <svg className="h-full w-full" fontFamily="DejaVu Sans, sans-serif">
                  {room.map((i) => <path key={i} d={"M" + (10 + i * 23.500) + " 13v42"} stroke="#294047" />)}
                  <path d="M10 34h352" stroke="#294047" />
                  <path d="M128 13v42M245 13v42" stroke="#79878c" />
                  <path d="M10 13h352v42H10z" fill="none" stroke="#d5dadd" strokeWidth="2" />
                  <circle cx="46" cy="37" r="6" fill="#14484a" stroke="#2c6a6c" />
                  <circle cx="221" cy="37" r="6" fill="#14484a" stroke="#2c6a6c" />
                  <circle cx="280" cy="31" r="6" fill="#f0f" stroke="#fbf" />
                  <circle cx="325" cy="67" r="6" fill="#ff9b0a" stroke="#ffd28a" />
                  <circle cx="397" cy="37" r="9" fill="#0a7f0a" stroke="#b8dcb8" />
                  <g fill="#98a3a6" fontSize="11">
                    <text x="8" y="69">3.6</text><text x="124" y="69">1.6</text><text x="237" y="69">-0.4</text><text x="356" y="71">-2.4</text>
                    <text x="370" y="57">1.2</text><text x="198" y="87">Y</text>
                  </g>
                  <text x="405" y="31" fill="#d5dadd" fontSize="13">0</text>
                </svg>
              </div>
            </div>
          </div>
        </div>
      </div>
    </section>
  );
}

/* ---------- REAPER main window ---------- */

const marks = [["1.1.00", "0:00.000"], ["33.1.00", "1:04.000"], ["65.1.00", "2:08.000"], ["97.1.00", "3:12.000"], ["129.1.00", "4:16.000"], ["161.1.00", "5:20.000"], ["193.1.00", "6:24.000"], ["225.1.00", "7:28.000"]];
const ticks = Array.from({ length: 117 }, (_, i) => (i * 226) / 16);

const ToolIcon = ({ children, on, label }) => (
  <button aria-label={label} className={"grid h-[26px] w-[26px] place-items-center " + (on ? "bg-[#2b5046] text-[#1fd6a0]" : "text-[#a0a0a0]")}>{children}</button>
);
const Knob = ({ className = "h-[18px] w-[18px]" }) => (
  <svg viewBox="0 0 20 20" className={className}><circle cx="10" cy="10" r="9" fill="#c3c8c8" stroke="#222" /><path d="M3 12a8 8 0 0 0 14 0z" fill="#a9abab" /><circle cx="10" cy="4" r="1.500" fill="#222" /></svg>
);
const Rec = ({ className = "h-[22px] w-[22px]" }) => (
  <svg viewBox="0 0 24 24" className={className}><circle cx="12" cy="12" r="11" fill="#a34a56" stroke="#5b2a30" /><circle cx="12" cy="12" r="5" fill="none" stroke="#e0a5a8" strokeWidth="2" /></svg>
);
const Env = () => (
  <svg viewBox="0 0 14 10" className="h-2.5 w-3.5"><path d="M1 9l4-6 3 3h5" fill="none" stroke="#222" strokeWidth="1.200" /><path d="M0 7h3v3H0zM4 1h3v3H4zM10 5h3v3h-3z" fill="#222" /></svg>
);
const Routes = ({ dim }) => (
  <svg viewBox="0 0 18 18" className={"h-[18px] w-[18px] " + (dim ? "opacity-60" : "")}>
    <path d="M0 0h18v18H0z" fill="#2a3136" /><path d="M0 14L5 0h4L3 18H0z" fill="#1fa88a" /><path d="M5 18L11 0h4L9 18z" fill={dim ? "#666" : "#f2d723"} /><path d="M11 18l6-18h1v18z" fill="#345a78" />
  </svg>
);
const Fader = ({ top, bottom, thumb }) => (
  <svg className="h-full w-5">
    <path d={"M10 " + top + "V" + bottom} stroke="#000" strokeWidth="3" />
    <rect x="1" y={thumb} width="18" height="38" rx="4" fill="#777c7a" stroke="#111" />
    <rect x="2" y={thumb + 1} width="16" height="5" rx="2" fill="#dfe6e3" />
    <rect x="2" y={thumb + 19} width="16" height="9" fill="#c7b2b9" />
    <rect x="2" y={thumb + 26} width="16" height="4" fill="#f4eaee" />
    <path d={"M1 " + (thumb + 19) + "h18"} stroke="#333" />
  </svg>
);
const Mini = ({ children, className = "" }) => (
  <button className={"grid h-[17px] w-[18px] place-items-center rounded-sm border border-black text-[11px] leading-none " + className}>{children}</button>
);

function Mixer() {
  return (
    <div className="flex h-[332px] shrink-0 pl-[5px] text-[11px] leading-3 text-[#bbb]">
      <div className="flex w-[85px] flex-col items-center">
        <span className="mt-1 text-[10px] text-[#ddd]">center</span><Knob className="h-5 w-5" />
        <div className="mt-[6px] flex min-h-0 w-full flex-1 bg-[#262626]">
          <div className="flex w-[70px] flex-col items-center">
            <span className="mt-[3px] text-[10px]">0.00dB</span>
            <div className="mt-2.5 flex w-full justify-around text-[10px]"><span>-inf</span><span>-inf</span></div>
            <div className="mt-1 flex h-[204px] w-full justify-between text-[10px] text-[#666]">
              <div className="flex flex-col justify-between">{["12", "6", "0-", "6-", "12-", "18-", "24-", "30-", "36-", "42-"].map((v) => <span key={v}>{v}</span>)}</div>
              <div className="flex flex-col justify-between py-3.5">{["-6-", "-12-", "-18-", "-24-", "-30-", "-36-", "-42-", "-48-", "-54-"].map((v) => <span key={v}>{v}</span>)}</div>
              <div className="flex flex-col items-end justify-between">{["12", "6", "-0", "-6", "-12", "-18", "-24", "-30", "-36", "-42"].map((v) => <span key={v}>{v}</span>)}</div>
            </div>
            <div className="mt-auto flex gap-4 text-[10px] font-bold text-[#2fa383]"><span>RMS</span><span className="font-normal">-inf</span></div>
            <span className="mb-0.5 mt-1 pl-3 text-[11px] text-[#ddd]">MASTER</span>
          </div>
          <Fader top={26} bottom={264} thumb={80} />
        </div>
      </div>
      <div className="flex w-[31px] flex-col items-center pl-1 pt-[5px] text-[9px]">
        <Mini className="bg-[#888]"><span className="h-2 w-2 rounded-full border border-[#444]" /></Mini><span className="mt-0.5">MONO</span>
        <Mini className="mt-0.5 bg-[#2c2c2c] text-[#d6574f]">M</Mini><Mini className="bg-[#2c2c2c] text-[#d8d348]">S</Mini>
        <span className="mt-1.5"><Routes /></span><span className="mt-px">ROUTE</span>
        <Mini className="mt-1 bg-[#6c6c6c] text-white">FX</Mini><Mini className="h-3.5 bg-[#8a8a8a]"><Power className="h-2 w-2 text-[#222]" /></Mini>
        <Mini className="mt-2 bg-[#999]"><Env /></Mini><span className="mt-1">TRIM</span>
        <Mini className="mt-1 bg-[#2a2a2a] font-bold text-white">i</Mini>
      </div>
      <div className="flex w-[106px] flex-col">
        <div className="flex h-[73px] flex-col bg-[#808a86] p-1.5">
          <button className="flex h-4 items-center justify-between rounded-r-full bg-[#5d6764] px-1 text-[10px] text-white">Input 1<ChevronDown className="h-3 w-3 rounded-full bg-[#8d9693]" /></button>
          <div className="mt-1.5 flex justify-between">
            <button className="flex h-4 w-9 items-center justify-between rounded-r-full bg-[#5d6764] px-1 text-[10px] text-white">in<ChevronDown className="h-3 w-3 rounded-full bg-[#8d9693]" /></button>
            <button className="grid h-[18px] w-[18px] place-items-center border border-[#555] text-[8px] font-bold leading-[8px] text-[#222]">IN FX</button>
          </div>
          <span className="mx-auto"><Knob /></span>
        </div>
        <div className="flex flex-1 bg-[#222]">
          <div className="flex w-[54px] flex-col items-center pt-2 text-[10px]"><span>-inf</span><Volume1 className="mt-auto h-4 w-4 fill-[#999] text-[#999]" /><span className="h-7" /></div>
          <div className="flex w-5 flex-col items-center"><div className="min-h-0 flex-1"><Fader top={12} bottom={184} thumb={49} /></div><Rec className="h-5 w-5 shrink-0" /><span className="mb-1 mt-2.5 w-16 -translate-x-3 text-center text-[12px] text-[#ddd]">Process</span></div>
          <div className="flex flex-1 flex-col items-center pt-1.5">
            <Mini className="bg-[#2c2c2c] text-[#d6574f]">M</Mini><Mini className="mt-0.5 bg-[#2c2c2c] text-[#d8d348]">S</Mini>
            <span className="mt-1.5"><Routes dim /></span>
            <Mini className="mt-1.5 bg-[#2b8f6c] text-[#9fe6cb]">FX</Mini><Mini className="h-3.5 bg-[#4cd6a0]"><Power className="h-2 w-2 text-[#222]" /></Mini>
            <Mini className="mt-2 bg-[#999]"><Env /></Mini>
            <span className="mt-2.5 grid h-4 w-4 place-items-center rounded-full bg-[#8a8a8a]"><span className="h-2 w-2 border border-[#333]" /></span>
          </div>
        </div>
        <div className="grid h-[18px] place-items-center bg-[#808a86] text-[12px] text-white">1</div>
      </div>
    </div>
  );
}

const Round = ({ children, className }) => <button className={"grid shrink-0 place-items-center rounded-full border border-black " + className}>{children}</button>;

function ReaperWindow() {
  return (
    <section aria-label="REAPER" className="flex min-h-0 flex-1 flex-col bg-[#323232] text-[13px] leading-4">
      <header className="h-[49px] shrink-0 bg-white text-[#777]">
        <div className="flex h-[27px] items-center pl-0.5">
          <Reaper /><h1 className="ml-[5px] text-[#999]">06_OLD_ch16_5s [modified] - REAPER v7.09 - EVALUATION LICENSE</h1>
          <div className="ml-auto flex">
            <button aria-label="Minimize" className="grid w-[53px] place-items-center"><Minus className="h-3.5 w-3.5" strokeWidth={1.500} /></button>
            <button aria-label="Restore" className="grid w-[53px] place-items-center"><Copy className="h-3 w-3 -scale-x-100" strokeWidth={1.500} /></button>
            <button aria-label="Close" className="grid w-[53px] place-items-center"><X className="h-4 w-4" strokeWidth={1.200} /></button>
          </div>
        </div>
        <nav className="flex h-[22px] items-center gap-[13px] pl-[7px] pr-1.5">
          {["File", "Edit", "View", "Insert", "Item", "Track", "Options", "Actions", "Help"].map((m) => <button key={m}>{m}</button>)}
          <span className="ml-2">[FX program envelope change: Tra...]</span>
          <span className="ml-auto">[audio device closed]</span>
        </nav>
      </header>
      <div className="flex min-h-0 flex-1">
        <div className="flex w-[698px] shrink-0 flex-col">
          <div className="flex h-[126px] shrink-0 items-start gap-px pl-1 pt-[49px]">
            <ToolIcon label="New"><File className="h-5 w-5" strokeWidth={1.500} /></ToolIcon>
            <ToolIcon label="Open"><svg viewBox="0 0 22 22" className="h-[22px] w-[22px]"><path d="M11 1l4 5h-3v7h-2V6H7z" fill="currentColor" /><rect x="2" y="14" width="18" height="6" rx="1" fill="none" stroke="currentColor" /><path d="M5 17h1M16 17h1" stroke="currentColor" /></svg></ToolIcon>
            <ToolIcon label="Save"><svg viewBox="0 0 22 22" className="h-[22px] w-[22px]"><path d="M11 13l4-5h-3V0h-2v8H7z" fill="currentColor" /><rect x="2" y="14" width="18" height="7" rx="1" fill="currentColor" /><path d="M5 18h1" stroke="#323232" /></svg></ToolIcon>
            <ToolIcon label="Info"><Info className="h-5 w-5 rotate-180 -scale-x-100" strokeWidth={1.500} /></ToolIcon>
            <ToolIcon label="Undo"><svg viewBox="0 0 22 22" className="h-[22px] w-[22px]" fill="currentColor"><path d="M2 4v11h9l-4-3c5-3 10-2 13 4C19 8 12 4 5 9z" /></svg></ToolIcon>
            <ToolIcon label="Redo"><svg viewBox="0 0 22 22" className="h-[22px] w-[22px]" fill="currentColor"><path d="M20 4v11h-9l4-3c-5-3-10-2-13 4C3 8 10 4 17 9z" /></svg></ToolIcon>
            <ToolIcon label="Metronome"><svg viewBox="0 0 20 20" className="h-5 w-5"><path d="M7 6h6l3 12H4z" fill="#a0a0a0" /><path d="M3 12a8 8 0 0 1 14 0M7 2h6" stroke="#a0a0a0" strokeWidth="1.500" fill="none" /><path d="M10 7v9" stroke="#323232" /></svg></ToolIcon>
            <span className="w-3.5" />
            <ToolIcon label="Select"><span className="h-4 w-[18px] border border-dashed border-[#a0a0a0] bg-[#5a5a5a]" /></ToolIcon>
            <span className="w-[3px]" />
            <ToolIcon on label="Crossfade"><svg viewBox="0 0 20 20" className="h-5 w-5" fill="none" stroke="currentColor" strokeWidth="1.500"><path d="M1 3h5c5 0 4 15 11 15M19 3h-4C9 3 10 18 3 18" /></svg></ToolIcon>
            <ToolIcon on label="Grouping"><Link2 className="h-[22px] w-[22px]" /></ToolIcon>
            <ToolIcon label="Ripple"><svg viewBox="0 0 20 20" className="h-[18px] w-[18px]" fill="none" stroke="currentColor">{[1, 8, 15].map((x) => [1, 8, 15].map((y) => <rect key={x + "-" + y} x={x} y={y} width="4" height="4" />))}</svg></ToolIcon>
            <ToolIcon on label="Envelopes"><svg viewBox="0 0 20 20" className="h-5 w-5" fill="none" stroke="currentColor" strokeWidth="1.500"><path d="M5 7l5-5 5 5" /><rect x="2" y="12" width="7" height="5" rx="2.500" /><rect x="11" y="12" width="7" height="5" rx="2.500" /></svg></ToolIcon>
            <ToolIcon on label="Grid"><svg viewBox="0 0 20 20" className="h-5 w-5" stroke="currentColor" strokeDasharray="3 1.500"><path d="M3 1v18M8 1v18M13 1v18M18 1v18" /></svg></ToolIcon>
            <ToolIcon on label="Snap"><svg viewBox="0 0 20 20" className="h-5 w-5" fill="none" stroke="currentColor" strokeWidth="3"><path d="M7 4h4a6 6 0 0 1 0 12H7M3 4h2M3 16h2" /></svg></ToolIcon>
            <ToolIcon on label="Lock"><Lock className="h-[18px] w-[18px] fill-[#1fd6a0]" /></ToolIcon>
            <span className="w-3" />
            <ToolIcon label="Edit"><svg viewBox="0 0 22 22" className="h-[22px] w-[22px]"><path d="M1 1h14l6 20z" fill="#9a9a9a" /><path d="M9 1l12 18" stroke="#323232" strokeWidth="1.500" /></svg></ToolIcon>
          </div>
          <div className="flex h-[142px] shrink-0 pl-0.5 pr-2">
            <div className="grid w-[18px] place-items-center bg-[#808a86] text-white">1</div>
            <div className="flex min-w-0 flex-1 flex-col bg-[#262626]">
              <div className="flex h-[30px] items-center">
                <div className="flex h-full w-[583px] items-center bg-[#808a86] pl-1.5">
                  <div className="flex h-6 w-[145px] items-center justify-between rounded-full bg-[#262626]"><Rec /><span className="flex-1 pl-1.5 text-[12px] text-white">Process</span><Knob className="h-5 w-5" /></div>
                  <button className="ml-1.5 h-[22px] w-[18px] border border-black bg-[#3a3533] text-[12px] text-[#e0604f]">M</button>
                  <button className="h-[22px] w-[18px] border border-black bg-[#36362f] text-[12px] text-[#e0da4a]">S</button>
                  <button className="ml-1.5 h-[22px] w-[18px] rounded-l bg-[#2b8f6c] text-[12px] text-[#a9ecd2]">FX</button>
                  <button aria-label="FX on" className="grid h-[22px] w-[15px] place-items-center rounded-r bg-[#4cd6a0] text-[#1c5a42]"><Power className="h-2.5 w-2.5" strokeWidth={3} /></button>
                  <button className="ml-1.5 flex h-[22px] w-9 items-center justify-center border border-[#444] bg-[#a9abaa] text-[9px] text-[#222]"><Env />TRIM</button>
                </div>
                <span className="ml-1.5 w-[58px] overflow-hidden whitespace-nowrap rounded-sm bg-[#999] pl-1 text-[10px] text-[#222]">sparta_6Dc</span>
              </div>
              <div className="mt-1.5 flex items-center pl-1.5">
                <span className="grid h-[18px] w-[18px] place-items-center rounded-full border-2 border-[#111] bg-[#2a2a2a]"><span className="h-2 w-2 rounded-full bg-[#3fb48e]" /></span>
                <div className="w-[67px] overflow-hidden whitespace-nowrap rounded bg-[#35a384] text-[10px] leading-[11px] text-[#111]"><div className="bg-[#999] pl-1">receiver_coor</div><div className="pl-1">-1.766</div></div>
              </div>
              {[0, 1, 2].map((i) => <span key={i} className="ml-3 mt-3.5 h-2 w-2 rounded-full bg-[#999]" />)}
            </div>
          </div>
          <div className="mt-2 border-t border-[#2a2a2a]" />
        </div>
        <div className="flex min-w-0 flex-1 flex-col">
          <div className="relative h-[126px] shrink-0 pt-6">
            <div className="h-[22px] bg-[#3d3d3d]"><span className="ml-2.5 mt-0.5 inline-grid h-[18px] w-3.5 place-items-center rounded border border-[#e66] bg-[#b80000] text-[11px] text-white">3</span></div>
            <div className="mt-[38px] grid grid-flow-col auto-cols-[226px] overflow-hidden text-[#8d8d8d]">
              {marks.map(([a, b]) => (
                <div key={a} className="h-[42px] border-l border-[#777] pl-1 pt-0.5">
                  <div className="w-fit border-b border-[#777] leading-[15px]">{a}</div><div className="text-[11px] leading-[13px]">{b}</div>
                </div>
              ))}
            </div>
            <svg className="pointer-events-none absolute inset-0 h-full w-full overflow-visible">
              {ticks.map((x) => <path key={x} d={"M" + x + " 116v10"} stroke="#666" />)}
              <path d="M10 41v85" stroke="#a01818" />
              <path d="M169 77v49" stroke="#3f8f84" />
              <path d="M161 67h16l-8 11z" fill="#3f8f84" />
            </svg>
          </div>
          <div className="flex min-h-0 flex-1">
            <div className="relative min-w-0 flex-1 overflow-hidden bg-[#424242]">
              <div className="w-[1060px]">
                <div className="flex h-[15px] items-center pl-3 text-[11px] text-[#d8d8d8]"><Knob className="h-[15px] w-[15px]" /><span className="mx-0.5 bg-[#888] px-0.5 text-[#222]">M</span><span className="bg-[#888] px-px text-[#222]">FX</span><span className="ml-1.5">[-15.0dB] noise_1000sec.wav</span></div>
                <div className="h-[51px] border-t-2 border-white bg-[#cbcbcb]" />
                <div className="h-[23px] bg-[#505050]" />
                <div className="h-[52px] bg-[#cbcbcb]" />
              </div>
              <svg className="pointer-events-none absolute inset-0 h-full w-full">
                {ticks.map((x) => <path key={x} d={"M" + x + " 0v2000"} stroke="#2f2f2f" />)}
                {ticks.slice(0, 76).map((x) => <path key={x} d={"M" + x + " 17v124"} stroke="#cbcbcb" strokeDasharray="2 2" />)}
                <path d="M0 66h1060v23H0z" fill="#505050" />
                <path d="M169 0v2000" stroke="#3f8f84" />
                <path d="M10 0v2000" stroke="#a01818" />
              </svg>
            </div>
            <div className="flex w-4 flex-col items-center gap-2 bg-[#363636] pb-1 text-[#aaa]">
              <span className="mt-1 grid h-3 w-3 shrink-0 place-items-center rounded-full bg-black"><ChevronUp className="h-2 w-2" /></span>
              <div className="w-3 flex-1 rounded-full bg-[#5a5a5a]" />
              <span className="grid h-3 w-3 shrink-0 place-items-center rounded-full bg-black"><ChevronDown className="h-2 w-2" /></span>
              <span className="text-[18px] font-bold leading-4">+</span><span className="text-[18px] font-bold leading-4">−</span>
            </div>
          </div>
        </div>
      </div>
      <div className="flex h-3 shrink-0 justify-end border-t border-[#555]">
        <div className="h-full flex-1 pl-[698px]"><div className="mt-0.5 h-2.5 w-[1560px] rounded-full bg-[#4a4a4a]" /></div>
        <span className="flex items-center gap-2 pr-6 pt-3 text-[18px] font-bold leading-3 text-[#aaa]"><ChevronRight className="h-3 w-3 rounded-full bg-black" />+<span className="ml-1">−</span></span>
      </div>
      <div className="flex h-12 shrink-0 text-[#999]">
        <div className="flex w-[600px] flex-col pl-0.5">
          <span className="-mt-1.5 text-[11px] leading-3">Process [FX] sparta_6DoFconv: PDC 512</span>
          <div className="mt-1 flex h-9 items-center pl-1.5">
            <Round className="h-[22px] w-[22px] bg-[#222]"><svg viewBox="0 0 10 10" className="h-2.5 w-2.5" fill="#999"><path d="M0 0h2v10H0zM10 0v10L2 5z" /></svg></Round>
            <Round className="ml-0.5 h-[22px] w-[22px] bg-[#222]"><svg viewBox="0 0 10 10" className="h-2.5 w-2.5" fill="#999"><path d="M8 0h2v10H8zM0 0v10l8-5z" /></svg></Round>
            <span className="ml-1"><Rec className="h-7 w-7" /></span>
            <Round className="h-7 w-7 bg-[#cfc9cb]"><svg viewBox="0 0 10 10" className="h-3 w-3" fill="#222"><path d="M1 0v10l8-5z" /></svg></Round>
            <Round className="h-[22px] w-[22px] bg-[#12b57c] text-white"><RefreshCcw className="h-3.5 w-3.5" strokeWidth={3} /></Round>
            <Round className="ml-1.5 h-[22px] w-[22px] bg-[#222]"><span className="h-2 w-2 bg-[#999]" /></Round>
            <Round className="ml-1 h-[22px] w-[22px] bg-[#222]"><span className="h-2 w-2 border-x-[3px] border-[#999]" /></Round>
            <b className="ml-2.5 whitespace-nowrap text-[20px] leading-6 text-[#a5a5a5]">25.1.00 / 0:48.000</b>
            <span className="ml-auto text-[14px]">[Stopped]</span>
          </div>
        </div>
        <div className="ml-auto flex items-center gap-2 pr-3 text-[10px] leading-4"><span className="grid place-items-center rounded bg-[#262626] px-1 text-center">AL<ChevronDown className="h-2.5 w-2.5 rounded-full bg-[#777] text-black" /></span><svg viewBox="0 0 30 30" className="mr-3 h-[30px] w-[30px]"><circle cx="15" cy="15" r="14" fill="#222" /><path d="M15 2v12" stroke="#ccc" /></svg><span className="text-center">Rate:<br />1.0</span></div>
      </div>
      <Mixer />
      <div role="tablist" className="flex h-[17px] shrink-0 items-stretch bg-[#3c3c3c] font-['Liberation_Sans',Arial,sans-serif] text-[12px] text-[#999]">
        <span className="w-2.5 pl-1 text-white">!</span>
        <button role="tab" className="w-[72px] bg-[#76827f] font-bold text-[#1c1c1c] [clip-path:polygon(0_0,100%_0,92%_100%,8%_100%)]">☒ Mixer</button>
        <button role="tab" className="w-[108px] bg-[#333]">☒ Performance</button>
        <button role="tab" className="w-[118px] bg-[#333]">☒ Routing Matrix</button>
      </div>
    </section>
  );
}

export default function App() {
  return (
    <main className="grid h-screen grid-cols-[3fr_4fr] overflow-hidden bg-black font-['Open_Sans',sans-serif]">
      <div className="flex min-h-0 min-w-0 flex-col pb-2 pt-[211px]">
        <ExplorerWindow />
        <Taskbar tray={<time className="pr-1">15:52</time>} />
      </div>
      <div className="relative flex min-h-0 min-w-0 flex-col">
        <ReaperWindow />
        <Taskbar tray={
          <div className="flex items-center gap-2.5 pr-1">
            <ChevronUp className="h-5 w-5" strokeWidth={1.500} />
            <span className="grid h-[18px] w-3.5 place-items-center rounded-full bg-[#0a7be0]"><Bluetooth className="h-3.5 w-3.5" /></span>
            <svg viewBox="0 0 20 14" className="h-3.5 w-5"><path d="M6 3h12v8H6z" fill="#fff" /><path d="M19 5v4M1 3h5v3H1zM3 6v4h3M2 0v3M5 0v3" stroke="#fff" fill="none" /></svg>
            <Volume2 className="h-[18px] w-[18px]" strokeWidth={1.500} />
            <Globe className="h-[18px] w-[18px]" strokeWidth={1.500} />
            <span className="relative grid h-4 w-[18px] place-items-center border border-white"><RefreshCcw className="h-2.5 w-2.5" /><span className="absolute -bottom-1 right-0 h-2 w-2 rounded-full bg-[#f59a0c]" /></span>
            <span className="ml-1">ENG</span><time className="ml-2">15:52</time>
            <MessageSquareText className="ml-4 h-5 w-5 fill-white text-[#101010]" />
            <span className="ml-3 h-[35px] w-px bg-[#555]" />
          </div>
        } />
        <div className="font-['Liberation_Sans',Arial,sans-serif]">
          <ModDialog />
          <PluginWindow />
          <RenderDialog />
          <FinishedDialog />
        </div>
      </div>
    </main>
  );
}
